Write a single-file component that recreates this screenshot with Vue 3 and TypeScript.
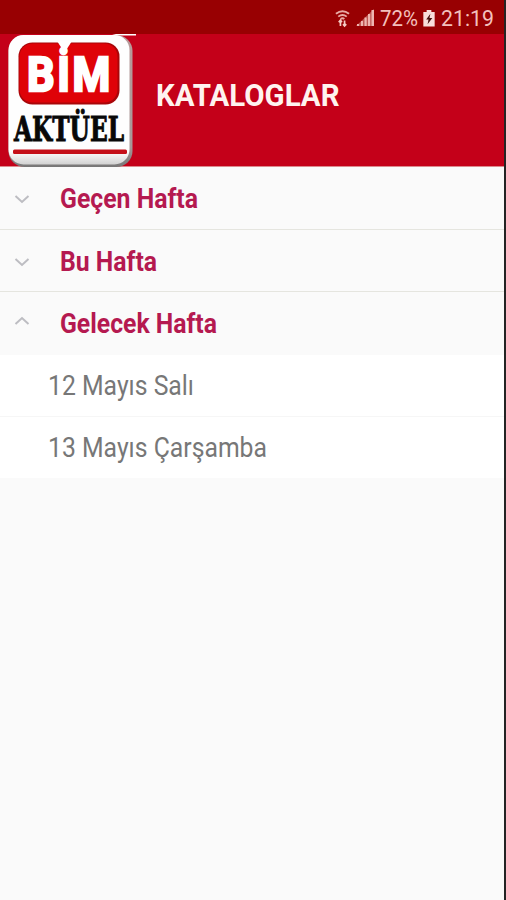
<script setup lang="ts">
interface CatalogGroup {
  title: string
  width: number
  open: boolean
  items: { label: string; width: number }[]
}

const groups: CatalogGroup[] = [
  { title: 'Geçen Hafta', width: 138, open: false, items: [] },
  { title: 'Bu Hafta', width: 97, open: false, items: [] },
  {
    title: 'Gelecek Hafta',
    width: 157,
    open: true,
    items: [
      { label: '12 Mayıs Salı', width: 146 },
      { label: '13 Mayıs Çarşamba', width: 219 },
    ],
  },
]
</script>

<template>
  <div class="screen">
    <div class="status">
      <svg class="wifi" viewBox="0 0 16 18">
        <path d="M1 4Q8 -1.500 15 4M3.500 7Q8 3.500 12.500 7M6 9.500Q8 8 10 9.500" />
        <path class="arrows" d="M5.800 17V11M10.200 11V17M4 13L5.800 10.800L7.400 13M8.600 15L10.200 17L12 15" />
      </svg>
      <svg class="signal" viewBox="0 0 18 18">
        <path d="M0 17L18 0V17Z" class="haze" />
        <path d="M1 15h2v2H1zM5 12h2v5H5zM8.500 8.500h2.200V17H8.500zM12 5h2.200v12H12zM15.500 1H18v16h-2.500z" />
      </svg>
      <svg class="percent" viewBox="0 0 40 24"><text x="1" y="20" textLength="38" lengthAdjust="spacingAndGlyphs">72%</text></svg>
      <svg class="battery" viewBox="0 0 12 18">
        <path d="M3.500 0h5v2H12v15.500H0V2h3.500z" />
        <path class="bolt" d="M7.500 4L3 10h2.500L4.500 15L9.500 8.500H6.500z" />
      </svg>
      <svg class="clock" viewBox="0 0 54 24"><text x="0" y="20" textLength="53" lengthAdjust="spacingAndGlyphs">21:19</text></svg>
    </div>

    <header class="bar">
      <svg class="logo" viewBox="0 0 140 133">
        <defs>
          <linearGradient id="edge" x1="0" y1="0" x2="0" y2="1">
            <stop offset="0" stop-color="#b99a9a" />
            <stop offset=".85" stop-color="#a79898" />
            <stop offset="1" stop-color="#777" />
          </linearGradient>
          <linearGradient id="face" x1="0" y1="0" x2="0" y2="1">
            <stop offset=".9" stop-color="#fefefe" />
            <stop offset="1" stop-color="#d2d2d2" />
          </linearGradient>
        </defs>
        <path d="M112 0H136V1.500H118z" fill="#fff" />
        <rect x="8.500" y="1" width="124" height="132" rx="16" fill="url(#edge)" />
        <rect x="8.500" y="1" width="121" height="129.500" rx="15" fill="url(#face)" />
        <rect x="18.500" y="8.500" width="101" height="62" rx="14" fill="#a80609" />
        <rect x="19.500" y="9.500" width="98" height="59" rx="13" fill="#df0208" />
        <text class="brand" x="27" y="57" textLength="86" lengthAdjust="spacingAndGlyphs">BİM</text>
        <path d="M57 7H72L66.500 15.500Q64.500 18 62.500 15.500z" fill="#fff" />
        <text class="stencil" x="14" y="106.500" textLength="110" lengthAdjust="spacingAndGlyphs">AKTÜEL</text>
        <rect x="13" y="115.500" width="114" height="4.500" rx="1.500" fill="#c51019" />
      </svg>
      <h1 class="heading">
        <svg viewBox="0 0 190 40"><text x="0" y="29" textLength="183.500" lengthAdjust="spacingAndGlyphs">KATALOGLAR</text></svg>
      </h1>
    </header>

    <main class="list">
      <section v-for="group in groups" :key="group.title">
        <div class="group" :class="{ open: group.open }">
          <svg class="chevron" viewBox="0 0 16 10"><path d="M1.500 2L8 8L14.500 2" /></svg>
          <svg class="title" viewBox="0 0 240 40">
            <text x="0" y="30" :textLength="group.width" lengthAdjust="spacingAndGlyphs">{{ group.title }}</text>
          </svg>
        </div>
        <div v-for="item in group.items" :key="item.label" class="item">
          <svg class="label" viewBox="0 0 240 40">
            <text x="0" y="29" :textLength="item.width" lengthAdjust="spacingAndGlyphs">{{ item.label }}</text>
          </svg>
        </div>
      </section>
    </main>
  </div>
</template>

<style>
body { margin: 0; background: #fafafa; }
</style>

<style scoped>
.screen {
  box-sizing: border-box;
  width: 506px;
  height: 900px;
  overflow: hidden;
  background: #fafafa;
  border-right: 2px solid #242424;
  font-family: Roboto, "Liberation Sans", sans-serif;
}
svg { display: block; flex: none; overflow: visible; }
.status {
  display: flex;
  align-items: center;
  height: 34px;
  padding-left: 335px;
  padding-top: 2px;
  box-sizing: border-box;
  background: #980002;
}
.status text { font-size: 22px; fill: #f3c0bd; }
.wifi { width: 15px; height: 17px; fill: none; stroke: #e8aaa5; stroke-width: 2; }
.wifi .arrows { stroke-width: 1.800; stroke: #f5cdc5; }
.signal { width: 18px; height: 18px; margin-left: 6px; fill: #eeb5b0; }
.signal .haze { fill: #bd5552; }
.percent { width: 40px; height: 24px; margin-left: 5px; }
.battery { width: 12px; height: 17px; margin-left: 4px; fill: #f9deda; }
.battery .bolt { fill: #45110f; }
.clock { width: 54px; height: 24px; margin-left: 6px; }
.bar {
  display: flex;
  box-sizing: border-box;
  height: 133px;
  background: #c40019;
  border-bottom: 1px solid #dc8a8e;
}
.logo { width: 140px; height: 133px; }
.brand { font: 700 49px Roboto, sans-serif; letter-spacing: 3px; fill: #fff; stroke: #fff; stroke-width: 2.500; }
.stencil { font: bold 33.500px "DejaVu Serif", serif; fill: #080808; stroke: #080808; stroke-width: 1; }
.heading { margin: 43px 0 0 16px; font-weight: normal; }
.heading svg { width: 190px; height: 40px; }
.heading text { font-size: 32px; font-weight: 700; fill: #fff3ef; }
.group {
  display: flex;
  align-items: center;
  box-sizing: border-box;
  height: 62px;
  padding-left: 14px;
  border-bottom: 1px solid #e5e5df;
  background: #fafafa;
}
section:first-child .group { height: 63px; }
.group.open { height: 63px; border-bottom-color: #fafafa; }
.chevron { width: 16px; height: 10px; margin-top: 2px; }
.open .chevron { transform: rotate(180deg); margin-top: -4px; }
.chevron path { fill: none; stroke: #bdbdc2; stroke-width: 2; }
.title { width: 240px; height: 40px; margin-left: 30px; }
.title text { font-size: 27px; font-weight: 700; fill: #b51950; }
.item {
  display: flex;
  align-items: center;
  box-sizing: border-box;
  height: 61px;
  padding-left: 48px;
  background: #fff;
}
.item + .item { height: 62px; border-top: 1px solid #f6f6f6; }
.label { width: 240px; height: 40px; }
.label text { font-size: 27px; fill: #777; }
</style>
